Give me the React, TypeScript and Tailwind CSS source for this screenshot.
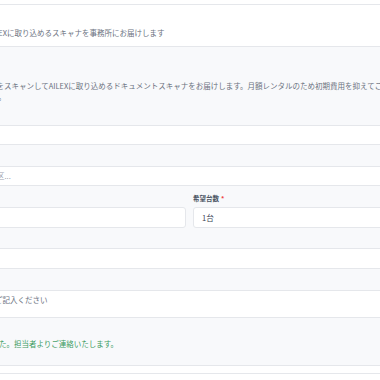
import React from "react";

const box = "h-[20px] w-full rounded-[3px] border border-[#e5e7eb] bg-white";

function Field({
  label,
  top = "pt-[7px]",
  gap = "mb-[3px]",
  required,
  children,
}: {
  label: string;
  top?: string;
  gap?: string;
  required?: boolean;
  children: React.ReactNode;
}) {
  return (
    <div className={top}>
      <div className={`${gap} h-[11px] text-[6.5px] leading-[11px] font-semibold text-[#4b5563]`}>
        {label}
        {required && <span className="ml-[2px] text-[#ef4444]">*</span>}
      </div>
      {children}
    </div>
  );
}

export default function App() {
  return (
    <div className="h-[380px] w-[380px] overflow-hidden bg-white font-['Noto_Sans_CJK_JP',sans-serif]">
      <div className="ml-[-100px] w-[600px]">
        <div className="h-[5px] border-b border-[#e5e7eb]" />

        {/* header */}
        <div className="h-[42px] border-b border-[#e5e7eb] bg-white px-[35px] pt-[22px]">
          <p className="whitespace-nowrap text-[7.5px] leading-[11px] text-[#6b7280]">
            ご契約後すぐにAILEXに取り込めるスキャナを事務所にお届けします
          </p>
        </div>

        {/* body */}
        <div className="h-[319px] border-b border-[#e5e7eb] bg-[#f8f9fb] px-[39px] pt-[33px]">
          <div className="w-[501px]">
            <p className="whitespace-nowrap indent-[5px] text-[7.5px] leading-[11px] text-[#6b7280]">
              お手元の紙書類をスキャンしてAILEXに取り込めるドキュメントスキャナをお届けします。月額レンタルのため初期費用を抑えてご利用いただけます。
              <br />
              配送料は無料です。
            </p>

            <Field label="氏名" top="pt-[9px]">
              <div className={box} />
            </Field>

            <Field label="住所">
              <div className={`${box} flex items-center pl-[12px] text-[7.5px] text-[#9ca3af]`}>
                東京都千代田区...
              </div>
            </Field>

            <div className="grid grid-cols-2 gap-x-[7px] pt-[7px]">
              <div>
                <div className="mb-[3px] h-[11px] text-[6.5px] leading-[11px] font-semibold text-[#4b5563]">
                  機種
                </div>
                <div className={`${box} h-[21px]`} />
              </div>
              <div>
                <div className="mb-[3px] h-[11px] text-[6.5px] leading-[11px] font-semibold text-[#4b5563]">
                  希望台数
                  <span className="ml-[2px] text-[#ef4444]">*</span>
                </div>
                <div className={`${box} flex h-[21px] items-center pl-[8px] text-[7.5px] text-[#374151]`}>
                  1台
                </div>
              </div>
            </div>

            <Field label="電話" top="pt-[6px]">
              <div className={`${box} h-[21px]`} />
            </Field>

            <Field label="備考">
              <div className="h-[28px] w-full rounded-[3px] border border-[#e5e7eb] bg-white pl-[10px] pt-[3px] text-[7.5px] leading-[11px] text-[#6b7280]">
                備考があればご記入ください
              </div>
            </Field>

            <p className="mt-[20px] whitespace-nowrap text-[7.5px] leading-[11px] text-[#3a9b5f]">
              送信が完了しました。担当者よりご連絡いたします。
            </p>
          </div>
        </div>

        {/* footer */}
        <div className="mt-[7px] h-[20px] border-t border-[#e5e7eb] bg-white" />
      </div>
    </div>
  );
}
